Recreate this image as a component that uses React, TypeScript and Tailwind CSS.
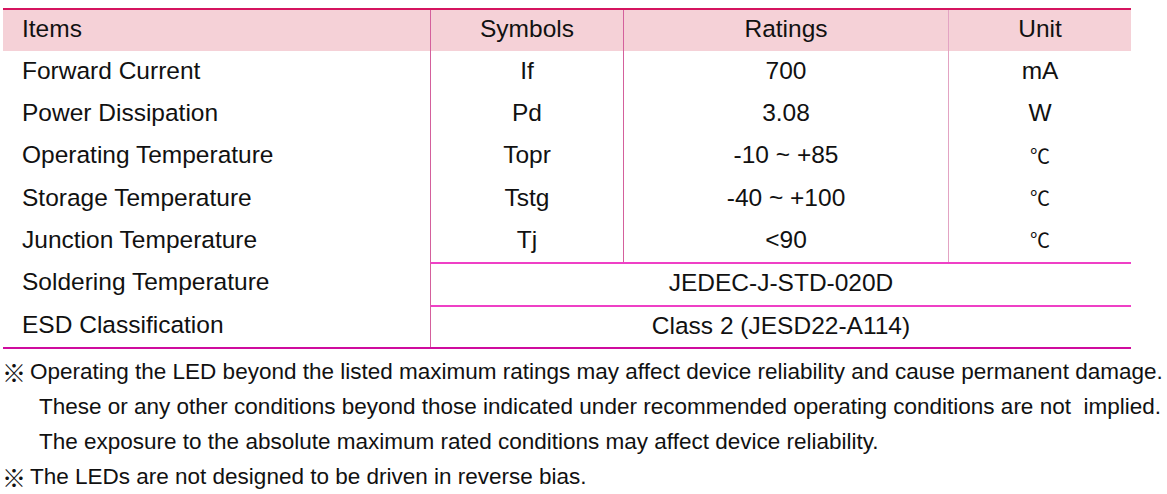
import React from "react";

const font = { fontFamily: '"Liberation Sans", Arial, "Noto Sans CJK JP", sans-serif' };

type Row = { item: string; sym?: string; rating: string; unit?: string };

const rows: Row[] = [
  { item: "Forward Current", sym: "If", rating: "700", unit: "mA" },
  { item: "Power Dissipation", sym: "Pd", rating: "3.08", unit: "W" },
  { item: "Operating Temperature", sym: "Topr", rating: "-10 ~ +85", unit: "℃" },
  { item: "Storage Temperature", sym: "Tstg", rating: "-40 ~ +100", unit: "℃" },
  { item: "Junction Temperature", sym: "Tj", rating: "<90", unit: "℃" },
  { item: "Soldering Temperature", rating: "JEDEC-J-STD-020D" },
  { item: "ESD Classification", rating: "Class 2 (JESD22-A114)" },
];

function Unit({ u }: { u: string }) {
  if (u === "℃") {
    return (
      <span className="text-[20px]" style={{ fontFamily: '"Noto Sans CJK JP", "Liberation Sans", sans-serif' }}>
        ℃
      </span>
    );
  }
  return <span>{u}</span>;
}

const mark = { fontFamily: '"Noto Sans CJK JP", sans-serif' };

export default function App() {
  return (
    <div className="bg-white w-[1167px] h-[494px] overflow-hidden text-[#111]" style={font}>
      <div className="pt-[8px] pl-[3px] w-[1131px]">
        <div className="border-t-2 border-[#d5145f]">
          <div className="flex h-[41px] bg-[#f5d1d7] text-[24.5px]">
            <div className="w-[427px] pl-[19px] pb-[3px] flex items-center">Items</div>
            <div className="w-[193px] border-l border-[#d4609c] pb-[3px] flex items-center justify-center">Symbols</div>
            <div className="w-[325px] border-l border-[#d4609c] pb-[3px] flex items-center justify-center">Ratings</div>
            <div className="flex-1 border-l border-[#e3a3c3] pb-[3px] flex items-center justify-center">Unit</div>
          </div>
          {rows.map((r, i) =>
            r.sym ? (
              <div key={i} className="flex h-[42.3px] text-[24.5px]">
                <div className="w-[427px] pl-[19px] pb-[2px] flex items-center">{r.item}</div>
                <div className="w-[193px] border-l border-[#d4609c] pb-[2px] flex items-center justify-center">{r.sym}</div>
                <div className="w-[325px] border-l border-[#d4609c] pb-[2px] flex items-center justify-center">{r.rating}</div>
                <div className="flex-1 border-l border-[#e3a3c3] pb-[2px] flex items-center justify-center">
                  <Unit u={r.unit ?? ""} />
                </div>
              </div>
            ) : (
              <div key={i} className="flex h-[42.3px] text-[24.5px]">
                <div className="w-[427px] pl-[19px] pb-[2px] flex items-center">{r.item}</div>
                <div className="flex-1 border-l border-[#d4609c] border-t-[2.5px] border-t-[#ef40c6] pb-[2px] flex items-center justify-center">
                  {r.rating}
                </div>
              </div>
            )
          )}
          <div className="h-[2px] bg-[#cf0c9e]" />
        </div>
      </div>
      <div className="mt-[5px] text-[22.5px] leading-[35px] whitespace-nowrap">
        <div className="flex items-center">
          <span className="w-[30px] pl-[2px] text-[24px] leading-[35px]" style={mark}>※</span>
          <span>Operating the LED beyond the listed maximum ratings may affect device reliability and cause permanent damage.</span>
        </div>
        <div className="pl-[39px]">
          These or any other conditions beyond those indicated under recommended operating conditions are not&nbsp; implied.
        </div>
        <div className="pl-[39px]">The exposure to the absolute maximum rated conditions may affect device reliability.</div>
        <div className="flex items-center">
          <span className="w-[30px] pl-[2px] text-[24px] leading-[35px]" style={mark}>※</span>
          <span>The LEDs are not designed to be driven in reverse bias.</span>
        </div>
      </div>
    </div>
  );
}
